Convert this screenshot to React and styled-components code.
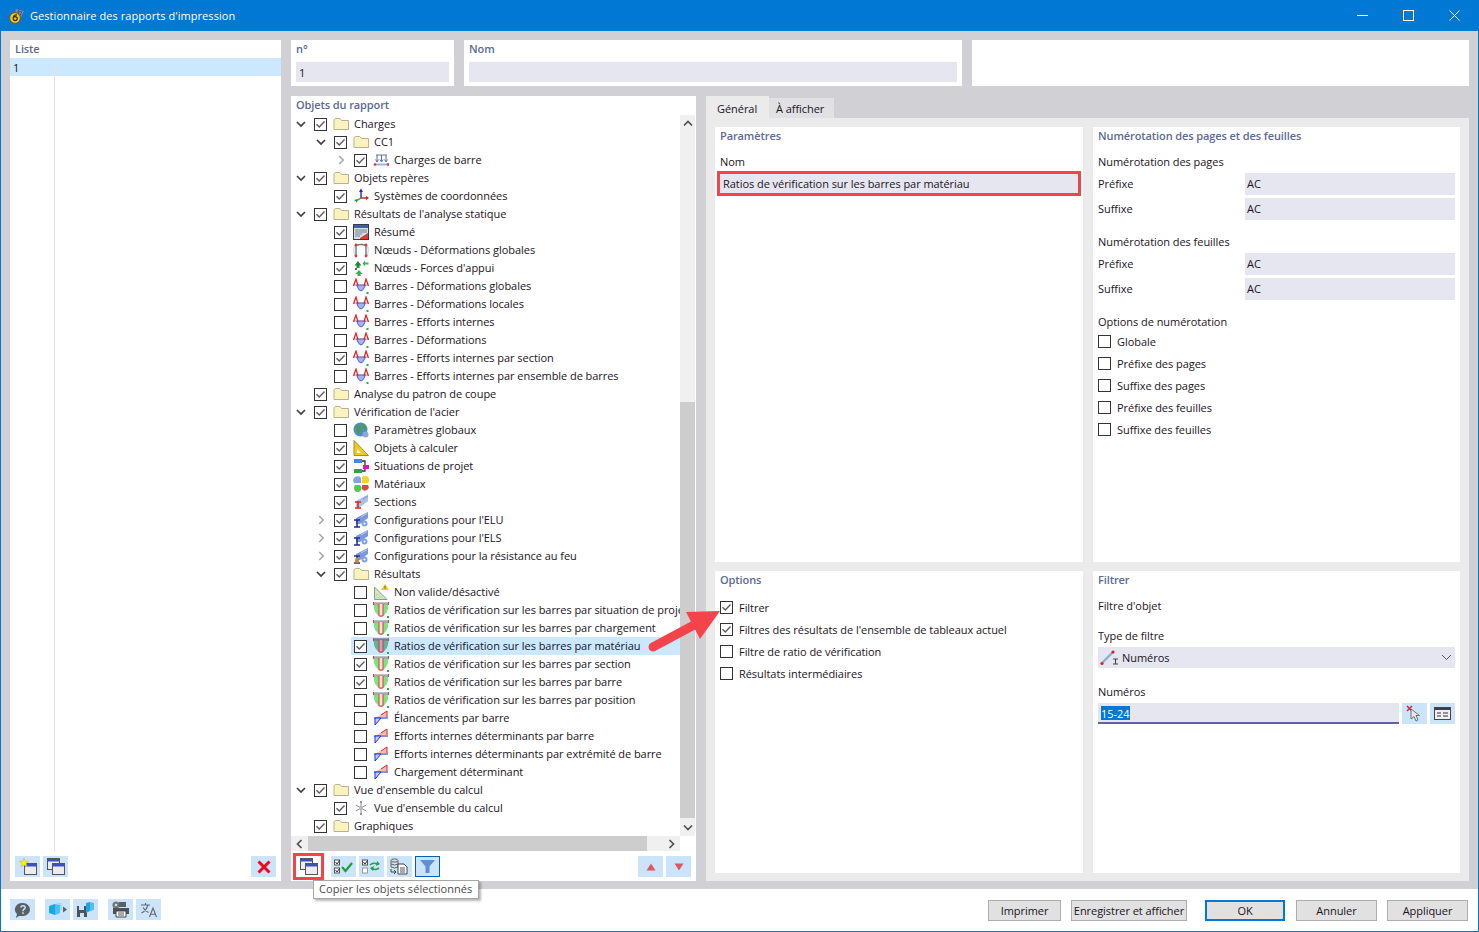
import React from "react";
import styled, { createGlobalStyle } from "styled-components";

const Global = createGlobalStyle`
  html, body { margin: 0; padding: 0; background: #fff; }
  body { font-family: "Open Sans", "Noto Sans", sans-serif; font-size: 11px; letter-spacing: -0.05px; color: #1a1423; }
  * { box-sizing: border-box; }
`;

const Window = styled.div`
  position: relative; width: 1479px; height: 932px; display: flex; flex-direction: column;
  border: 1px solid #0078d4; border-top: 0; overflow: hidden; background: #fff;
`;
const TitleBar = styled.div`
  height: 31px; flex: none; margin: 0 -1px; background: #0078d4; color: #fff; display: flex; align-items: center;
  font-size: 11px; letter-spacing: 0.06px; padding: 0 2px 0 9px;
`;
const TitleText = styled.span`margin-left: 5px; flex: 1;`;
const WinButton = styled.span`
  width: 46px; height: 31px; display: flex; align-items: center; justify-content: center;
`;
const Body = styled.div`
  flex: 1; background: #d0d0d5; padding: 9px 9px 8px 9px; display: grid; grid-template-columns: 271px 1fr; gap: 10px; min-height: 0;
`;
const ListPanel = styled.section`background: #fff; display: flex; flex-direction: column; min-height: 0;`;
const Heading = styled.div`
  height: ${p => p.$h ?? 18}px; line-height: 18px; padding-left: ${p => p.$pad ?? 0}px; color: #5b6a96; font-weight: 600; flex: none; letter-spacing: -0.1px;
`;
const ListBody = styled.div`flex: 1; display: grid; grid-template-columns: 45px 1fr; min-height: 0;`;
const ListCol = styled.div`border-right: ${p => p.$rule ? "1px solid #e4e4e6" : "0"};`;
const ListCell = styled.div`height: 18px; line-height: 19px; background: #cce8ff; padding-left: 3px;`;
const ListFoot = styled.div`height: 29px; flex: none; display: flex; gap: 3px; padding: 4px 5px 0;`;
const Push = styled.span`margin-left: auto; display: flex; gap: 3px;`;
const Tool = styled.span`
  width: 25px; height: 21px; flex: none; background: #cbe4f9; display: flex; align-items: center; justify-content: center;
  border: ${p => p.$active ? "1px solid #0a5ea8" : "0"};
`;
const HighlightTool = styled.span`
  width: 31px; height: 27px; flex: none; border: 3px solid #f4434a; display: flex; align-items: center; justify-content: center; margin-right: 4px;
`;
const Column = styled.div`display: flex; flex-direction: column; gap: 10px; min-height: 0;`;
const TopRow = styled.div`display: grid; grid-template-columns: 163px 498px 497px; gap: 10px; height: 46px; flex: none;`;
const TopCard = styled.div`background: #fff; padding: 0 5px;`;
const TopInput = styled.div`height: 20px; line-height: 22px; margin-top: 4px; background: #e6e6f0; padding-left: 3px;`;
const LowerRow = styled.div`flex: 1; display: grid; grid-template-columns: 405px 763px; gap: 10px; min-height: 0;`;
const TreePanel = styled.section`background: #fff; display: flex; flex-direction: column; min-height: 0;`;
const TreeArea = styled.div`height: 721px; flex: none; display: grid; grid-template-columns: 389px 16px;`;
const TreeList = styled.div`overflow: hidden; white-space: nowrap;`;
const Row = styled.div`height: 18px; display: flex; align-items: center; padding-left: ${p => p.$depth * 20}px;`;
const Chevron = styled.span`width: 20px; height: 18px; flex: none; display: flex; align-items: center; justify-content: center;`;
const RowInner = styled.div`
  flex: 1; height: 18px; display: flex; align-items: center; padding-left: 3px; background: ${p => p.$selected ? "#cce8ff" : "transparent"};
`;
const Box = styled.span`
  width: 13px; height: 13px; flex: none; background: #fff; border: 1px solid #35333a; display: flex; align-items: center; justify-content: center;
`;
const IconCell = styled.span`width: 21px; margin-left: 6px; flex: none; height: 18px; display: flex; align-items: center;`;
const RowText = styled.span`line-height: 18px;`;
const VBar = styled.div`background: #f0f0f0; display: flex; flex-direction: column; width: 15px;`;
const ArrowCell = styled.span`
  height: 18px; flex: none; display: flex; align-items: center; justify-content: center; padding-bottom: ${p => p.$lift ? 2 : 0}px;
`;
const VSpace = styled.span`height: 269px; flex: none;`;
const VThumb = styled.span`height: 416px; flex: none; background: #cdcdcd;`;
const HRow = styled.div`height: 15px; flex: none; display: flex;`;
const HBar = styled.div`width: 389px; background: #f0f0f0; display: flex;`;
const HArrow = styled.span`flex: none; width: ${p => p.$w}px; display: flex; align-items: center; justify-content: ${p => p.$end ? "flex-end" : "center"}; padding-right: ${p => p.$end ? 5 : 0}px;`;
const HThumb = styled.span`width: 339px; background: #cdcdcd; flex: none;`;
const ToolBar = styled.div`flex: 1; display: flex; align-items: center; gap: 3px; padding: 1px 5px 0 2px;`;
const TabArea = styled.section`display: flex; flex-direction: column; min-height: 0;`;
const TabStrip = styled.div`height: 22px; flex: none; display: flex; align-items: flex-end;`;
const Tab = styled.span`
  height: ${p => p.$on ? 22 : 20}px; padding: ${p => p.$on ? 3 : 0}px ${p => p.$on ? 11 : 7}px 0; width: ${p => p.$w}px; background: ${p => p.$on ? "#ebebeb" : "#e1e1e3"};
  display: flex; align-items: center;
`;
const TabPane = styled.div`
  flex: 1; background: #ebebeb; padding: 9px 9px 8px; display: grid; grid-template-columns: 368px 367px; grid-template-rows: 435px 302px; column-gap: 10px; row-gap: 9px;
`;
const Card = styled.div`background: #fff; padding: 0 5px;`;
const Label = styled.div`height: 18px; line-height: 18px; margin-top: ${p => p.$top}px;`;
const RedInput = styled.div`
  height: 25px; margin: 0 -3px; border: 3px solid #f4434a; background: #e6e6f0; line-height: 19px; padding-left: 3px;
`;
const InputRow = styled.div`
  display: grid; grid-template-columns: 147px 210px; height: 20px; margin-top: ${p => p.$top}px; line-height: 22px;
`;
const Field = styled.div`background: #e6e6f0; padding-left: 2px;`;
const Check = styled.div`height: 22px; display: flex; align-items: center; gap: 6px; margin-top: ${p => p.$top || 0}px;`;
const Select = styled.div`
  height: 21px; margin-top: 2px; background: #e6e6f0; display: flex; align-items: center; padding: 0 3px 0 2px; gap: 3px;
`;
const SelectText = styled.span`flex: 1;`;
const NumberRow = styled.div`display: flex; gap: 3px; margin-top: 2px; height: 21px;`;
const NumberField = styled.div`
  flex: 1; background: #e6e6f0; border-bottom: 2px solid #62629f; padding: 3px 0 0 3px; line-height: 14px;
`;
const Picked = styled.span`background: #0078d7; color: #fff; display: inline-block; height: 14px; line-height: 15px; padding-right: 1px;`;
const Footer = styled.div`
  height: 42px; flex: none; display: flex; padding: 10px 10px 0 9px; background: #fff;
`;
const ToolGroup = styled.div`display: flex; gap: 3px; margin-right: 10px;`;
const Actions = styled.div`margin-left: auto; margin-top: 1px; display: flex;`;
const Action = styled.span`
  width: ${p => p.$w}px; height: 21px; margin-left: ${p => p.$gap}px; display: flex; align-items: center; justify-content: center;
  background: #e1e1e1; border: ${p => p.$primary ? "2px solid #0078d7" : "1px solid #adadad"};
`;
const Tooltip = styled.div`
  position: absolute; left: 312px; top: 880px; width: 166px; height: 19px; background: #fff; border: 1px solid #a5a5a5;
  box-shadow: 2px 2px 2px rgba(0,0,0,.28); line-height: 16px; padding-left: 5px; color: #4a4a4a; letter-spacing: 0.05px;
`;
const Overlay = styled.svg`position: absolute; left: 639px; top: 595px; pointer-events: none;`;

const S = ({ w = 16, h = 16, v, children }) => <svg width={w} height={h} viewBox={v || `0 0 ${w} ${h}`} fill="none">{children}</svg>;

const Folder = () => <S><path d="M1 4V13.5H15.5V4.5H8.5L6.8 2.5H2.3Z" fill="#fbf2bd" stroke="#b9b28a"/></S>;
const Load = () => <S><path d="M3 3H14M4 3V9M8.5 3V9M13 3V9" stroke="#5a6ea8"/><path d="M2.5 7.5L4 10L5.5 7.5M7 7.5L8.5 10L10 7.5M11.5 7.5L13 10L14.5 7.5" stroke="#5a6ea8"/><path d="M2 12.5H15" stroke="#9fb7d8" strokeWidth="2"/><circle cx="2" cy="12.5" r="1.3" fill="#e03030"/><circle cx="15" cy="12.5" r="1.3" fill="#e03030"/></S>;
const Axes = () => <S><path d="M8 10V3" stroke="#1030d0" strokeWidth="1.4"/><path d="M6 4L8 0.5L10 4Z" fill="#1030d0"/><path d="M8 10H14" stroke="#d02020" strokeWidth="1.4"/><path d="M13 8L16 10L13 12Z" fill="#d02020"/><path d="M8 10L3 13" stroke="#20a030" strokeWidth="1.4"/><path d="M1 12L4.5 11L4 14.5Z" fill="#20a030"/></S>;
const Summary = () => <S><rect x="0.5" y="0.5" width="15" height="15" fill="#d8dde8" stroke="#33395a"/><rect x="1" y="1" width="14" height="3" fill="#3f5fa8"/><path d="M2 6H14M2 8H14M2 10H9M2 12H7" stroke="#77809a"/><path d="M7 14L15 9V15H7Z" fill="#d84030"/></S>;
const NodeDef = () => <S><path d="M3 14V3.5Q8 1.5 13 3.5V14" stroke="#777" strokeWidth="1.4"/><path d="M1.5 3Q0 8 1.5 14M14.5 3Q16 8 14.5 14" stroke="#ccc"/><circle cx="3" cy="3" r="1.4" fill="#d04040"/><circle cx="13" cy="3" r="1.4" fill="#d04040"/><circle cx="3" cy="14" r="1.4" fill="#d04040"/><circle cx="13" cy="14" r="1.4" fill="#d04040"/></S>;
const Forces = () => <S><path d="M5 1L8.5 5.5H6.5V8H3.5V5.5H1.5Z" fill="#1f8a3a"/><path d="M6 10L9.5 14H7.5V16H4.5V14H2.5Z" fill="#32b050"/><path d="M15.5 2.5H12V0.5L9.5 3.5L12 6.5V4.5H15.5Z" fill="#45b060"/><circle cx="3" cy="9" r="1" fill="#333"/></S>;
const BarDef = () => <S><path d="M3.5 7Q8 19 12.5 7Z" fill="#a6b2ee" stroke="#5060d8"/><path d="M0.5 7H15.5" stroke="#8a8fc8"/><path d="M0.5 8L3 1L5 8M11 8L13 1L15.5 8" stroke="#e82020" strokeWidth="1.2"/><rect x="13.5" y="14" width="2" height="2" fill="#1db34a"/></S>;
const Globe = () => <S><circle cx="7.5" cy="7.5" r="7" fill="#4d8fc0"/><path d="M3 3Q7 2 8 6T4 12ZM9 1Q14 3 13 8L10 6Z" fill="#4d9a50"/><circle cx="12.5" cy="12.5" r="3" fill="#8aa8d8"/></S>;
const Triangle = () => <S><path d="M1 0.5V15.5H15.5Z" fill="#f3c91a" stroke="#a09030"/><path d="M4 9V13H8Z" fill="#fff"/></S>;
const Situations = () => <S><path d="M1 1H9V5H1Z" fill="#4b86d8"/><path d="M10 7H16V11H10Z" fill="#e010d0"/><path d="M1 11H9V15H1Z" fill="#2aa640"/><path d="M9 3H12V7M12 11V13H9" stroke="#333" strokeWidth="1.3"/></S>;
const Materials = () => <S><path d="M1 7A3.6 3.6 0 0 1 8 2V7Z" fill="#8aa2dc"/><path d="M9 1A4 4 0 0 1 15 7H9Z" fill="#f2d42c"/><path d="M7 9A3.5 3.5 0 1 1 2 15Q0 12 2 9Z" fill="#52c84a"/><path d="M9 9H15A3.6 3.6 0 0 1 9 13Z" fill="#d84848"/></S>;
const Sections = () => <S><path d="M3 7L15 0.5V7L7 13H3Z" fill="#a8bfe6"/><path d="M10 5L15 2" stroke="#7b98cc"/><path d="M2 8H8M5 8V14M2 14H8" stroke="#e02020" strokeWidth="1.5"/></S>;
const Config = ({ fire }) => <S><path d="M3 6L15 0V6L7 12H3Z" fill="#7a98dc"/><path d="M8 5L14 1.5" stroke="#b8caee"/><path d="M1 8H7M4 8V15M1 15H7" stroke="#20308a" strokeWidth="1.5"/><circle cx="11.5" cy="11.5" r="3" fill="#7da2e4"/><circle cx="11.5" cy="11.5" r="1" fill="#fff"/>{fire && <path d="M2 13Q2 10 4 9Q6 11 6 13Q6 15 4 15T2 13Z" fill="#e08020"/>}</S>;
const Invalid = () => <S><path d="M1.5 3V15.5H14Z" fill="#cfe6c2" stroke="#8aa080"/><path d="M4 10V13H7Z" fill="#fff" stroke="#9ab090" strokeWidth=".5"/><path d="M12 0L16 6H8Z" fill="#f0c820"/><path d="M12 2V4.5" stroke="#7a5a10"/></S>;
const Ratio = ({ dark }) => <S><path d="M0.5 2Q0.5 12 8 15Q15.5 12 15.5 2Z" fill={dark ? "#5cb593" : "#78e580"}/><path d="M0 1.5H16" stroke={dark ? "#6f7f9f" : "#a3a6ac"} strokeWidth="2.4"/><path d="M0.5 0V3M15.5 0V3" stroke="#d84040"/><path d="M6 2H10V14H6Z" fill={dark ? "#b9a8c8" : "#fde0e0"}/><path d="M6 2V14H10V2" stroke="#e83030"/><rect x="14" y="14" width="2" height="2" fill="#1db34a"/></S>;
const Slender = () => <S><path d="M2 8L14 1V8Z" fill="#f5bcbc"/><path d="M8 5L14 1V7" stroke="#e82020"/><path d="M1 8H15" stroke="#8a96c8" strokeWidth="2"/><path d="M2 15V8L8 8Z" fill="#c6d0f6" stroke="#1c2ce8"/></S>;
const Star = () => <S><path d="M8 2V14M2.8 5L13.2 11M13.2 5L2.8 11" stroke="#8e8e96"/><circle cx="8" cy="8" r="2" fill="#b5b5bb"/><circle cx="8" cy="2" r="1" fill="#777"/><circle cx="8" cy="14" r="1" fill="#777"/></S>;

const ICONS = { folder: Folder, load: Load, axes: Axes, summary: Summary, nodedef: NodeDef, forces: Forces, bardef: BarDef, globe: Globe, tri: Triangle, sit: Situations, mat: Materials, sec: Sections, cfg: Config, fire: () => <Config fire />, inv: Invalid, ratio: Ratio, ratioD: () => <Ratio dark />, slender: Slender, star: Star };

const Tick = () => <svg width="11" height="11" viewBox="0 0 11 11" fill="none"><path d="M1.5 5.2L4.3 8L9.5 2.6" stroke="#5d5d63" strokeWidth="1.4"/></svg>;
const CheckBox = ({ on }) => <Box>{on ? <Tick /> : null}</Box>;
const ChevDown = () => <svg width="10" height="7" viewBox="0 0 10 7" fill="none"><path d="M1 1L5 5L9 1" stroke="#404040" strokeWidth="1.7"/></svg>;
const ChevRight = () => <svg width="7" height="10" viewBox="0 0 7 10" fill="none"><path d="M1.2 1L5.2 5L1.2 9" stroke="#a8a8a8" strokeWidth="1.6"/></svg>;
const ScrollUp = () => <svg width="10" height="7" viewBox="0 0 10 7" fill="none"><path d="M1 5.5L5 1.5L9 5.5" stroke="#505050" strokeWidth="1.7"/></svg>;
const ScrollDown = () => <svg width="10" height="7" viewBox="0 0 10 7" fill="none"><path d="M1 1.5L5 5.5L9 1.5" stroke="#505050" strokeWidth="1.7"/></svg>;
const ScrollLeft = () => <svg width="7" height="10" viewBox="0 0 7 10" fill="none"><path d="M5.5 1L1.5 5L5.5 9" stroke="#505050" strokeWidth="1.7"/></svg>;
const ScrollRight = () => <svg width="7" height="10" viewBox="0 0 7 10" fill="none"><path d="M1.5 1L5.5 5L1.5 9" stroke="#505050" strokeWidth="1.7"/></svg>;

const Win = ({ x = 0, y = 0 }) => <g transform={`translate(${x} ${y})`}><rect x=".5" y=".5" width="12" height="11" fill="#ececf0" stroke="#555"/><rect x="1" y="1" width="11" height="2.5" fill="#3a53c0"/></g>;
const NewIcon = () => <S w={18} h={17}><Win x={5} y={5}/><path d="M5 0L6.3 3.2L9.6 3.4L7 5.5L8 8.8L5 7L2 8.8L3 5.5L.4 3.4L3.7 3.2Z" fill="#f6f020" stroke="#b9b040" strokeWidth=".5"/></S>;
const CopyIcon = () => <S w={18} h={17}><Win x={0} y={0}/><Win x={5} y={5}/></S>;
const DeleteIcon = () => <S><path d="M2.5 2.5L13.5 13.5M13.5 2.5L2.5 13.5" stroke="#f00818" strokeWidth="3"/></S>;
const CheckAll = () => <S w={19} h={15}><rect x=".5" y="1" width="5" height="5" stroke="#555" fill="#fff"/><rect x=".5" y="9" width="5" height="5" stroke="#555" fill="#fff"/><path d="M1.5 3L3 5L5.5 1.5M1.5 11L3 13L5.5 9.5" stroke="#333"/><path d="M8 8L11.5 12L18 4" stroke="#1ca03c" strokeWidth="2.2"/></S>;
const Swap = () => <S w={19} h={15}><rect x=".5" y="1" width="5" height="5" stroke="#555" fill="#fff"/><rect x=".5" y="9" width="5" height="5" stroke="#999" fill="#fff"/><path d="M1.5 3L3 5L5.5 1.5" stroke="#333"/><path d="M8 6Q11 3 15 5L17 5M17 9Q13 12 9 9" stroke="#2aa050" strokeWidth="1.6"/><path d="M15 2L18 5L14 7ZM11 12L8 9L12 7Z" fill="#2aa050"/></S>;
const DbCopy = () => <S w={19} h={17}><ellipse cx="4.5" cy="2.5" rx="3.5" ry="1.6" fill="#d8d8dc" stroke="#666"/><path d="M1 3V9Q4.5 11 8 9V3M1 6Q4.5 8 8 6" stroke="#666"/><path d="M1 11V14H5M4 12L6 14L4 16" stroke="#444"/><path d="M8 6H14L17 9V16H8Z" fill="#fff" stroke="#444"/><path d="M10 10H15M10 12H15M10 14H15" stroke="#555"/></S>;
const Funnel = () => <S w={15} h={13}><path d="M0 0H15L9.5 6.5V13H5.5V6.5Z" fill="#5f8fd6"/></S>;
const Up = () => <S w={10} h={8}><path d="M5 .5L9.5 7.5H.5Z" fill="#e25563"/></S>;
const Down = () => <S w={10} h={8}><path d="M5 7.5L9.5 .5H.5Z" fill="#e25563"/></S>;
const Help = () => <S w={18} h={16}><path d="M9 1A7 6.5 0 0 1 9 14H5L2 16L3 12A7 6.5 0 0 1 9 1Z" fill="#5b6068"/><path d="M6.8 5.5Q7 3.8 9 3.8T11.2 5.5Q11.2 6.8 9.6 7.5Q9 8 9 9.3" stroke="#cbe4f9" strokeWidth="1.5"/><rect x="8.2" y="10.3" width="1.6" height="1.6" fill="#cbe4f9"/></S>;
const Cube = () => <S w={20} h={15}><path d="M1 4L7 2V13L1 11Z" fill="#18a8e8"/><path d="M7 2L12 3V11L7 13Z" fill="#4cc0f0"/><path d="M9 1H14V8H12V3L9 2Z" fill="#a8d8f0"/><path d="M15 4.5L19 7.5L15 10.5Z" fill="#5b6068"/></S>;
const SaveCube = () => <S w={18} h={17}><path d="M0 5H10V16H0Z" fill="#4d5158"/><path d="M2 5H7V9H2Z" fill="#cbe4f9"/><path d="M3 12H7V16H3Z" fill="#cbe4f9"/><path d="M9 2L13 1V10L9 12Z" fill="#18a8e8"/><path d="M13 1L17 2V9L13 10Z" fill="#5bbcec"/></S>;
const Printer = () => <S w={18} h={17}><circle cx="4" cy="4" r="3.6" fill="#777"/><circle cx="4" cy="4" r="1.2" fill="#cbe4f9"/><path d="M7 1H14V6H7Z" fill="#5b5f66"/><path d="M1 7H17V13H1Z" fill="#4d5158"/><path d="M4 10H14V16H4Z" fill="#fff" stroke="#444"/><path d="M6 12H12M6 14H12" stroke="#555"/></S>;
const Lang = () => <S w={18} h={16}><path d="M1 3H10M5.5 1V3M8 3Q6 9 1.5 11M3 5.5Q5 9 8.5 10.5" stroke="#66686e" strokeWidth="1.1"/><path d="M9.5 15L13 6L16.5 15M10.8 12.2H15.2" stroke="#66686e" strokeWidth="1.1"/></S>;
const Pick = () => <S w={17} h={17}><path d="M1 1L6 6M6 1L1 6" stroke="#e02030" strokeWidth="1.5"/><path d="M5 4L5 14L8 11.5L10 16L12 15L10 10.5L13.5 10.5Z" fill="#e8e8e8" stroke="#555" strokeWidth=".8"/></S>;
const Dialog = () => <S w={17} h={13}><rect x=".5" y=".5" width="16" height="12" fill="#f0f0f4" stroke="#444"/><rect x="1" y="1" width="15" height="2" fill="#3a3f50"/><path d="M3 6H7M9 6H14M3 9H7M9 9H14" stroke="#333"/></S>;
const BarType = () => <S w={19} h={16}><path d="M2 13L13 2" stroke="#8fa9d8" strokeWidth="2.4"/><circle cx="2" cy="13.5" r="1.6" fill="#e02020"/><circle cx="13" cy="2" r="1.6" fill="#e02020"/><path d="M13 9H18M15.5 9V14M13 14H18" stroke="#444" strokeWidth="1.1"/></S>;
const SelectChevron = () => <svg width="11" height="7" viewBox="0 0 11 7" fill="none"><path d="M1 1L5.5 5.5L10 1" stroke="#55555c" strokeWidth="1"/></svg>;
const AppLogo = () => <S><path d="M7 1L15 3L12 9L6 7Z" fill="#7d8ea8"/><path d="M8 3L13 4M7.5 5L12 6.5M10 1.5L9 8M13 3L11 8" stroke="#39465e" strokeWidth=".6"/><circle cx="6" cy="10" r="5.4" fill="#f2c318" stroke="#6e5a18"/><path d="M8 7Q4.5 6.5 4.2 10.5A2 2 0 1 0 6.2 8.6Q5 8.6 4.4 9.6" stroke="#3a3018" strokeWidth="1.3"/></S>;

const T = (depth, text, on, icon, arrow, selected) => ({ depth, text, on, icon, arrow, selected });
const RV = "Ratios de vérification sur les barres par ";
const ROWS = [
  T(0, "Charges", 1, "folder", "d"), T(1, "CC1", 1, "folder", "d"), T(2, "Charges de barre", 1, "load", "r"),
  T(0, "Objets repères", 1, "folder", "d"), T(1, "Systèmes de coordonnées", 1, "axes"),
  T(0, "Résultats de l'analyse statique", 1, "folder", "d"), T(1, "Résumé", 1, "summary"),
  T(1, "Nœuds - Déformations globales", 0, "nodedef"), T(1, "Nœuds - Forces d'appui", 1, "forces"),
  T(1, "Barres - Déformations globales", 0, "bardef"), T(1, "Barres - Déformations locales", 0, "bardef"),
  T(1, "Barres - Efforts internes", 0, "bardef"), T(1, "Barres - Déformations", 0, "bardef"),
  T(1, "Barres - Efforts internes par section", 1, "bardef"), T(1, "Barres - Efforts internes par ensemble de barres", 0, "bardef"),
  T(0, "Analyse du patron de coupe", 1, "folder"), T(0, "Vérification de l'acier", 1, "folder", "d"),
  T(1, "Paramètres globaux", 0, "globe"), T(1, "Objets à calculer", 1, "tri"), T(1, "Situations de projet", 1, "sit"),
  T(1, "Matériaux", 1, "mat"), T(1, "Sections", 1, "sec"), T(1, "Configurations pour l'ELU", 1, "cfg", "r"),
  T(1, "Configurations pour l'ELS", 1, "cfg", "r"), T(1, "Configurations pour la résistance au feu", 1, "fire", "r"),
  T(1, "Résultats", 1, "folder", "d"), T(2, "Non valide/désactivé", 0, "inv"),
  T(2, RV + "situation de projet", 0, "ratio"), T(2, RV + "chargement", 0, "ratio"),
  T(2, RV + "matériau", 1, "ratioD", null, true), T(2, RV + "section", 1, "ratio"), T(2, RV + "barre", 1, "ratio"),
  T(2, RV + "position", 0, "ratio"), T(2, "Élancements par barre", 0, "slender"),
  T(2, "Efforts internes déterminants par barre", 0, "slender"), T(2, "Efforts internes déterminants par extrémité de barre", 0, "slender"),
  T(2, "Chargement déterminant", 0, "slender"), T(0, "Vue d'ensemble du calcul", 1, "folder", "d"),
  T(1, "Vue d'ensemble du calcul", 1, "star"), T(0, "Graphiques", 1, "folder"),
];

const TreeRow = ({ row }) => {
  const Icon = ICONS[row.icon];
  return (
    <Row $depth={row.depth}>
      <Chevron>{row.arrow === "d" ? <ChevDown /> : row.arrow === "r" ? <ChevRight /> : null}</Chevron>
      <RowInner $selected={row.selected}>
        <CheckBox on={row.on} />
        <IconCell><Icon /></IconCell>
        <RowText>{row.text}</RowText>
      </RowInner>
    </Row>
  );
};

const CheckRow = ({ on, top, children }) => <Check $top={top}><CheckBox on={on} /><span>{children}</span></Check>;

export default function App() {
  return (
    <Window>
      <Global />
      <TitleBar>
        <AppLogo />
        <TitleText>Gestionnaire des rapports d'impression</TitleText>
        <WinButton><svg width="11" height="11" fill="none"><path d="M0 5.5H11" stroke="#fff"/></svg></WinButton>
        <WinButton><svg width="11" height="11" fill="none"><rect x=".5" y=".5" width="10" height="10" stroke="#fff"/></svg></WinButton>
        <WinButton><svg width="11" height="11" fill="none"><path d="M.5 .5L10.5 10.5M10.5 .5L.5 10.5" stroke="#fff"/></svg></WinButton>
      </TitleBar>
      <Body>
        <ListPanel>
          <Heading $pad={5}>Liste</Heading>
          <ListBody>
            <ListCol $rule><ListCell>1</ListCell></ListCol>
            <ListCol><ListCell /></ListCol>
          </ListBody>
          <ListFoot>
            <Tool><NewIcon /></Tool>
            <Tool><CopyIcon /></Tool>
            <Push><Tool><DeleteIcon /></Tool></Push>
          </ListFoot>
        </ListPanel>
        <Column>
          <TopRow>
            <TopCard><Heading>n°</Heading><TopInput>1</TopInput></TopCard>
            <TopCard><Heading>Nom</Heading><TopInput /></TopCard>
            <TopCard />
          </TopRow>
          <LowerRow>
            <TreePanel>
              <Heading $pad={5} $h={19}>Objets du rapport</Heading>
              <TreeArea>
                <TreeList>{ROWS.map((r, i) => <TreeRow key={i} row={r} />)}</TreeList>
                <VBar>
                  <ArrowCell $lift><ScrollUp /></ArrowCell>
                  <VSpace />
                  <VThumb />
                  <ArrowCell><ScrollDown /></ArrowCell>
                </VBar>
              </TreeArea>
              <HRow>
                <HBar>
                  <HArrow $w={17}><ScrollLeft /></HArrow>
                  <HThumb />
                  <HArrow $w={33} $end><ScrollRight /></HArrow>
                </HBar>
              </HRow>
              <ToolBar>
                <HighlightTool><CopyIcon /></HighlightTool>
                <Tool><CheckAll /></Tool>
                <Tool><Swap /></Tool>
                <Tool><DbCopy /></Tool>
                <Tool $active><Funnel /></Tool>
                <Push>
                  <Tool><Up /></Tool>
                  <Tool><Down /></Tool>
                </Push>
              </ToolBar>
            </TreePanel>
            <TabArea>
              <TabStrip>
                <Tab $on $w={63}>Général</Tab>
                <Tab $w={65}>À afficher</Tab>
              </TabStrip>
              <TabPane>
                <Card>
                  <Heading>Paramètres</Heading>
                  <Label $top={8}>Nom</Label>
                  <RedInput>Ratios de vérification sur les barres par matériau</RedInput>
                </Card>
                <Card>
                  <Heading>Numérotation des pages et des feuilles</Heading>
                  <Label $top={8}>Numérotation des pages</Label>
                  <InputRow $top={2}><span>Préfixe</span><Field>AC</Field></InputRow>
                  <InputRow $top={5}><span>Suffixe</span><Field>AC</Field></InputRow>
                  <Label $top={15}>Numérotation des feuilles</Label>
                  <InputRow $top={2}><span>Préfixe</span><Field>AC</Field></InputRow>
                  <InputRow $top={5}><span>Suffixe</span><Field>AC</Field></InputRow>
                  <Label $top={15}>Options de numérotation</Label>
                  <CheckRow top={-1}>Globale</CheckRow>
                  <CheckRow>Préfixe des pages</CheckRow>
                  <CheckRow>Suffixe des pages</CheckRow>
                  <CheckRow>Préfixe des feuilles</CheckRow>
                  <CheckRow>Suffixe des feuilles</CheckRow>
                </Card>
                <Card>
                  <Heading>Options</Heading>
                  <CheckRow on top={7}>Filtrer</CheckRow>
                  <CheckRow on>Filtres des résultats de l'ensemble de tableaux actuel</CheckRow>
                  <CheckRow>Filtre de ratio de vérification</CheckRow>
                  <CheckRow>Résultats intermédiaires</CheckRow>
                </Card>
                <Card>
                  <Heading>Filtrer</Heading>
                  <Label $top={8}>Filtre d'objet</Label>
                  <Label $top={12}>Type de filtre</Label>
                  <Select><BarType /><SelectText>Numéros</SelectText><SelectChevron /></Select>
                  <Label $top={15}>Numéros</Label>
                  <NumberRow>
                    <NumberField><Picked>15-24</Picked></NumberField>
                    <Tool><Pick /></Tool>
                    <Tool><Dialog /></Tool>
                  </NumberRow>
                </Card>
              </TabPane>
            </TabArea>
          </LowerRow>
        </Column>
      </Body>
      <Footer>
        <ToolGroup><Tool><Help /></Tool></ToolGroup>
        <ToolGroup><Tool><Cube /></Tool><Tool><SaveCube /></Tool></ToolGroup>
        <ToolGroup><Tool><Printer /></Tool><Tool><Lang /></Tool></ToolGroup>
        <Actions>
          <Action $w={73} $gap={0}>Imprimer</Action>
          <Action $w={116} $gap={10}>Enregistrer et afficher</Action>
          <Action $w={80} $gap={18} $primary>OK</Action>
          <Action $w={81} $gap={11}>Annuler</Action>
          <Action $w={81} $gap={10}>Appliquer</Action>
        </Actions>
      </Footer>
      <Tooltip>Copier les objets sélectionnés</Tooltip>
      <Overlay width="90" height="65" viewBox="640 595 90 65" fill="none">
        <path d="M653 647L694 625" stroke="#f4434a" strokeWidth="9" strokeLinecap="round"/>
        <path d="M686 612L720 611L700 639Z" fill="#f4434a"/>
      </Overlay>
    </Window>
  );
}
